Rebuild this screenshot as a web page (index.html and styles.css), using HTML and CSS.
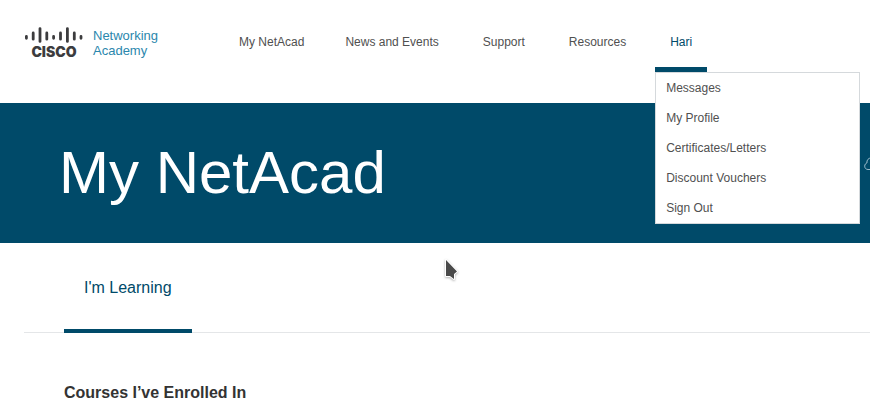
FILE: index.html
```html
<!DOCTYPE html>
<html lang="en">
<head>
    <meta charset="utf-8">
    <title>My NetAcad</title>
    <link rel="stylesheet" href="styles.css">
</head>
<body>
    <header class="header">
        <a class="logo" href="#">
            <span class="logo-mark">
                <svg class="logo-bars" width="60" height="18" viewBox="0 0 60 18" aria-hidden="true">
                    <g stroke="#3c3c3e" stroke-width="2.800" stroke-linecap="round">
                        <path d="M2.4 9.500v1.800M9.200 6v6.200M16 1.600v12.800M22.800 6v6.200M29.600 9.500v1.800M36.500 6v6.200M43.400 1.600v12.800M50.300 6v6.200M57 9.500v1.800"/>
                    </g>
                </svg>
                <span class="logo-name">CISCO</span>
            </span>
            <span class="logo-text">Networking<br>Academy</span>
        </a>
        <nav class="nav">
            <div class="nav-group">
                <a class="nav-link" href="#">My NetAcad</a>
                <a class="nav-link" href="#">News and Events</a>
            </div>
            <a class="nav-link" href="#">Support</a>
            <a class="nav-link" href="#">Resources</a>
            <div class="nav-user">
                <a class="nav-link active" href="#">Hari</a>
                <div class="dropdown">
                    <a href="#">Messages</a>
                    <a href="#">My Profile</a>
                    <a href="#">Certificates/Letters</a>
                    <a href="#">Discount Vouchers</a>
                    <a href="#">Sign Out</a>
                </div>
            </div>
        </nav>
    </header>

    <section class="hero">
        <h1>My NetAcad</h1>
        <svg class="hero-cloud" width="20" height="14" viewBox="0 0 20 14" aria-hidden="true">
            <path d="M4 12.500C2 12.500.7 11 .7 9.200c0-1.700 1-2.900 2.200-3.200C2.600 3 4.500 1 7 1c2.700 0 4.600 1.300 5.300 3.200 2-.4 4.200 1 4.300 3 1.600.2 2.700 1.300 2.700 2.700 0 1.500-1.200 2.600-2.700 2.600z" fill="none" stroke="#9dbccb"/>
        </svg>
    </section>

    <main class="content">
        <div class="tabs">
            <a class="tab active" href="#">I'm Learning</a>
        </div>
        <h2>Courses I’ve Enrolled In</h2>
    </main>

    <!-- mouse pointer -->
    <svg class="pointer" width="20" height="26" viewBox="0 0 20 26" aria-hidden="true">
        <path d="M4 3L15 14.500L12 17v5L8 19H4z" fill="#4a4a4a" stroke="#fff" stroke-width="2" stroke-linejoin="round" paint-order="stroke"/>
    </svg>
</body>
</html>
```

FILE: styles.css
```css
body {
    margin: 0;
    background: #fff;
    color: #333;
    font-family: "Liberation Sans", Arial, sans-serif;
    font-size: 12px;
}
a {
    color: #505050;
    text-decoration: none;
}
.header {
    display: flex;
    align-items: flex-start;
    padding: 0 10px 31px 24px;
}
.logo {
    display: flex;
    gap: 9px;
    padding-top: 27px;
}
.logo-mark {
    display: flex;
    flex-direction: column;
    align-items: center;
}
.logo-bars {
    display: block;
}
.logo-name {
    color: #3c3c3e;
    font-size: 14px;
    font-weight: 900;
    line-height: 14px;
    font-family: Inter, Arial, sans-serif;
}
.logo-text {
    padding-top: 1px;
    color: #2b87ad;
    font-size: 13px;
    line-height: 15px;
}
.nav {
    display: flex;
    gap: 14px;
    margin-left: 66px;
}
.nav-group {
    display: flex;
    gap: 11px;
}
.nav-link {
    display: block;
    padding: 30px 15px 13px;
    border-bottom: 5px solid transparent;
    line-height: 24px;
    white-space: nowrap;
}
.nav-link.active {
    color: #004a69;
    border-bottom-color: #004a69;
}
.nav-user {
    position: relative;
}
.dropdown {
    position: absolute;
    top: 100%;
    left: 0;
    z-index: 10;
    width: 203px;
    background: #fff;
    border: 1px solid #d5d9dc;
}
.dropdown a {
    display: block;
    padding: 0 10px;
    line-height: 30px;
}
.hero {
    display: flex;
    justify-content: space-between;
    align-items: flex-start;
    height: 140px;
    padding-left: 59px;
    background: #004a69;
    overflow: hidden;
}
.hero h1 {
    margin: 0;
    color: #fff;
    font-size: 60px;
    font-weight: normal;
    line-height: 140px;
}
/* runs off the right edge */
.hero-cloud {
    margin: 54px -14px 0 0;
}
.content {
    padding-left: 24px;
}
.tabs {
    display: flex;
    padding-left: 40px;
    box-shadow: inset 0 -1px #e4e6e8;
}
.tab {
    padding: 33px 20px 29px;
    border-bottom: 4px solid transparent;
    font-size: 16px;
    line-height: 24px;
}
.tab.active {
    color: #004a69;
    border-bottom-color: #004a69;
}
.content h2 {
    margin: 48px 0 0 40px;
    font-size: 16px;
    line-height: 24px;
}
.pointer {
    position: absolute;
    top: 257px;
    left: 442px;
    filter: drop-shadow(0 1px 1px rgba(0,0,0,0.3));
}
```
